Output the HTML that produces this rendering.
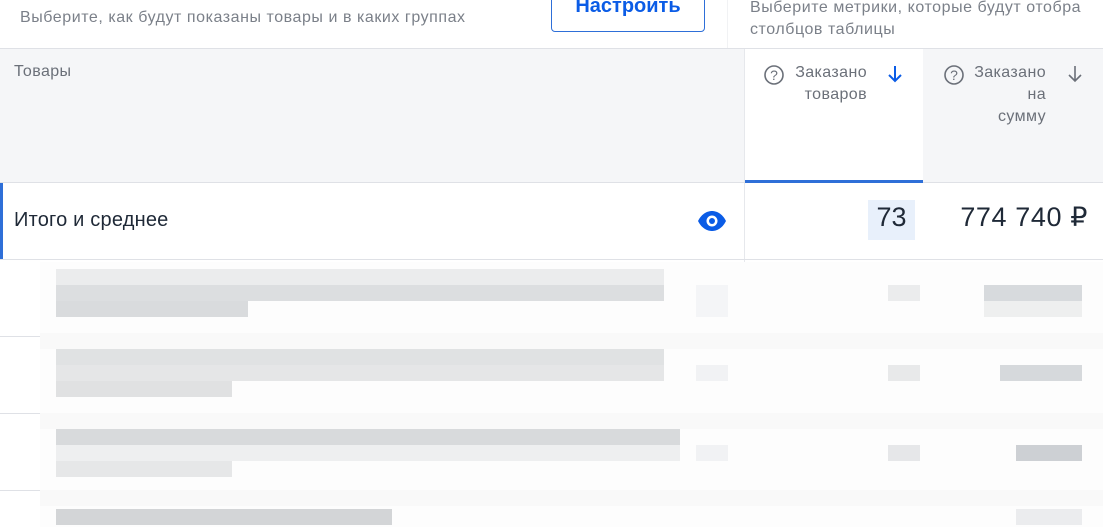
<!DOCTYPE html>
<html><head><meta charset="utf-8"><style>
*{margin:0;padding:0;box-sizing:border-box}
body{width:1103px;height:527px;overflow:hidden;background:#fff;font-family:"Liberation Sans","DejaVu Sans",sans-serif;position:relative}
.a{position:absolute;white-space:nowrap}
.b{position:absolute;height:16px}
</style></head><body>
<!-- top -->
<div class="a" style="left:20px;top:-22px;font-size:20px;color:#1f2937">Группировка товаров</div>
<div class="a" style="left:20px;top:9px;font-size:16px;letter-spacing:0.55px;color:#7b8089">Выберите, как будут показаны товары и в каких группах</div>
<div class="a" style="left:551px;top:-12px;width:154px;height:44px;border:1px solid #2e6fd8;border-radius:4px;color:#0b5ce6;font-size:20px;font-weight:bold;text-align:center;line-height:34px">Настроить</div>
<div class="a" style="left:727px;top:0;width:1px;height:48px;background:#f1f2f4"></div>
<div class="a" style="left:750px;top:-3px;font-size:16px;letter-spacing:0.55px;color:#7b8089;line-height:22px">Выберите метрики, которые будут отобра<br>столбцов таблицы</div>
<!-- header -->
<div class="a" style="left:0;top:48px;width:1103px;height:1px;background:#dfe1e6"></div>
<div class="a" style="left:0;top:49px;width:745px;height:134px;background:#f5f6f8"></div>
<div class="a" style="left:745px;top:49px;width:178px;height:134px;background:#fff"></div>
<div class="a" style="left:923px;top:49px;width:180px;height:134px;background:#f5f6f8"></div>
<div class="a" style="left:744px;top:49px;width:1px;height:134px;background:#e6e8ec"></div>
<div class="a" style="left:14px;top:63px;font-size:16px;letter-spacing:0.4px;color:#6b7079">Товары</div>
<svg class="a" style="left:763px;top:64px" width="22" height="22" viewBox="0 0 22 22"><circle cx="11" cy="11" r="9" fill="none" stroke="#6b7079" stroke-width="1.6"/><text x="11" y="16" font-size="14" text-anchor="middle" fill="#6b7079" font-family="Liberation Sans">?</text></svg>
<div class="a" style="left:767px;top:62px;font-size:16px;letter-spacing:0.4px;color:#6b7079;line-height:22px;text-align:right;width:100px">Заказано<br>товаров</div>
<svg class="a" style="left:886px;top:64px" width="18" height="20" viewBox="0 0 18 20"><path d="M9 2V17M3 11L9 17L15 11" fill="none" stroke="#0b5ce6" stroke-width="2"/></svg>
<svg class="a" style="left:943px;top:64px" width="22" height="22" viewBox="0 0 22 22"><circle cx="11" cy="11" r="9" fill="none" stroke="#6b7079" stroke-width="1.6"/><text x="11" y="16" font-size="14" text-anchor="middle" fill="#6b7079" font-family="Liberation Sans">?</text></svg>
<div class="a" style="left:946px;top:62px;font-size:16px;letter-spacing:0.4px;color:#6b7079;line-height:22px;text-align:right;width:100px">Заказано<br>на<br>сумму</div>
<svg class="a" style="left:1066px;top:64px" width="18" height="20" viewBox="0 0 18 20"><path d="M9 2V17M3 11L9 17L15 11" fill="none" stroke="#6b7079" stroke-width="1.6"/></svg>
<div class="a" style="left:745px;top:180px;width:178px;height:3px;background:#2e6fd8"></div>
<div class="a" style="left:0;top:182px;width:745px;height:1px;background:#dfe1e6"></div>
<div class="a" style="left:923px;top:182px;width:180px;height:1px;background:#dfe1e6"></div>
<!-- total row -->
<div class="a" style="left:0;top:183px;width:3px;height:77px;background:#2e6fd8"></div>
<div class="a" style="left:14px;top:209px;font-size:20px;letter-spacing:0.2px;color:#1f2937">Итого и среднее</div>
<svg class="a" style="left:697px;top:210px" width="30" height="22" viewBox="0 0 30 22"><path d="M1 11C5 3 11 1 15 1S25 3 29 11C25 19 19 21 15 21S5 19 1 11Z" fill="#0b5ce6"/><circle cx="15" cy="11" r="5.5" fill="#fff"/><circle cx="15" cy="11" r="3" fill="#0b5ce6"/></svg>
<div class="a" style="left:744px;top:183px;width:1px;height:90px;background:#e6e8ec"></div>
<div class="a" style="left:868px;top:200px;width:47px;height:40px;background:#e8f0fb"></div>
<div class="a" style="left:868px;top:202px;width:47px;text-align:center;font-size:27px;color:#1f2937">73</div>
<div class="a" style="left:920px;top:202px;width:168px;text-align:right;font-size:27px;letter-spacing:0.6px;color:#1f2937">774 740 ₽</div>
<div class="a" style="left:0;top:259px;width:1103px;height:1px;background:#dfe1e6"></div>
<!-- blurred -->
<div class="a" style="left:40px;top:262px;width:1063px;height:265px;background:#fdfdfd"></div>
<div class="a" style="left:0;top:336px;width:40px;height:1px;background:#dfe1e6"></div>
<div class="a" style="left:0;top:413px;width:40px;height:1px;background:#dfe1e6"></div>
<div class="a" style="left:0;top:490px;width:40px;height:1px;background:#dfe1e6"></div>
<div class="a" style="left:40px;top:333px;width:1063px;height:16px;background:#f9f9f9"></div>
<div class="a" style="left:40px;top:413px;width:1063px;height:16px;background:#f9f9f9"></div>
<div class="a" style="left:40px;top:490px;width:1063px;height:16px;background:#f9f9f9"></div>

<div class="b" style="left:56px;top:269px;width:608px;background:#ebeced"></div>
<div class="b" style="left:56px;top:285px;width:608px;background:#dcdee0"></div>
<div class="b" style="left:56px;top:301px;width:192px;background:#d9dbdd"></div>
<div class="b" style="left:56px;top:349px;width:608px;background:#e0e2e3"></div>
<div class="b" style="left:56px;top:365px;width:608px;background:#e5e6e7"></div>
<div class="b" style="left:56px;top:381px;width:176px;background:#e0e1e2"></div>
<div class="b" style="left:56px;top:429px;width:624px;background:#d8dadc"></div>
<div class="b" style="left:56px;top:445px;width:624px;background:#eeeff0"></div>
<div class="b" style="left:56px;top:461px;width:176px;background:#e6e7e8"></div>
<div class="b" style="left:56px;top:509px;width:336px;background:#d3d5d7"></div>

<div class="b" style="left:696px;top:285px;width:32px;height:32px;background:#f4f5f7"></div>
<div class="b" style="left:696px;top:365px;width:32px;background:#f1f2f4"></div>
<div class="b" style="left:696px;top:445px;width:32px;background:#f1f2f4"></div>
<div class="b" style="left:888px;top:285px;width:32px;background:#ebeced"></div>
<div class="b" style="left:888px;top:365px;width:32px;background:#e8e9ea"></div>
<div class="b" style="left:888px;top:445px;width:32px;background:#e6e7e9"></div>
<div class="b" style="left:984px;top:285px;width:98px;background:#d7dadd"></div>
<div class="b" style="left:984px;top:301px;width:98px;background:#eeefef"></div>
<div class="b" style="left:1000px;top:365px;width:82px;background:#d6d9dc"></div>
<div class="b" style="left:1016px;top:445px;width:66px;background:#cdd0d4"></div>
<div class="b" style="left:1016px;top:509px;width:66px;background:#ebecee"></div>
</body></html>
